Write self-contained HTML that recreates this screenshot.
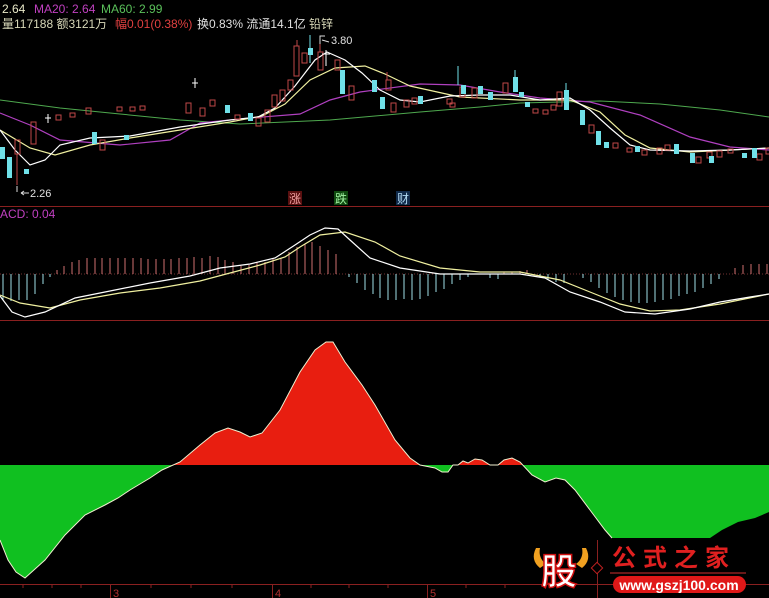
<!DOCTYPE html>
<html><head><meta charset="utf-8"><style>
html,body{margin:0;padding:0;background:#000;width:769px;height:598px;overflow:hidden}
svg{display:block}
text{font-family:"Liberation Sans","Noto Sans CJK SC",sans-serif}
</style></head><body>
<svg width="769" height="598" viewBox="0 0 769 598" xmlns="http://www.w3.org/2000/svg">
<rect width="769" height="598" fill="#000"/>
<!-- header text -->
<text x="2" y="13" font-size="12" fill="#e8e8c8">2.64</text>
<text x="34" y="13" font-size="12" fill="#c040c0">MA20: 2.64</text>
<text x="101" y="13" font-size="12" fill="#5ac05a">MA60: 2.99</text>
<text x="2" y="28" font-size="12" fill="#d8d8b8">量117188 额3121万</text>
<text x="115" y="28" font-size="12" fill="#e04040">幅0.01(0.38%)</text>
<text x="197" y="28" font-size="12" fill="#e0e0e0">换0.83% 流通14.1亿</text>
<text x="309" y="28" font-size="12" fill="#d8d8b8">铅锌</text>
<!-- separators -->
<line x1="0" y1="206.5" x2="769" y2="206.5" stroke="#8a2020"/>
<line x1="0" y1="320.5" x2="769" y2="320.5" stroke="#8a2020"/>
<!-- MA lines -->
<polyline fill="none" stroke="#4ea84e" stroke-width="1" points="0,100 60,108 120,114 180,120 240,124 330,120 420,112 480,107 520,103 600,101 660,104 720,110 769,117"/>
<polyline fill="none" stroke="#b040c0" stroke-width="1.2" points="0,113 30,125 60,140 120,145 170,140 200,123 250,118 300,114 330,100 360,92 420,84 460,85 500,92 540,98 590,102 640,115 690,137 730,147 769,150"/>
<polyline fill="none" stroke="#f0f0a0" stroke-width="1.2" points="0,130 30,148 55,155 90,145 130,138 180,130 230,122 262,116 285,104 310,80 335,68 365,66 385,74 410,86 460,97 520,100 570,100 600,112 625,135 650,148 690,152 730,150 769,148"/>
<polyline fill="none" stroke="#ffffff" stroke-width="1.2" points="0,130 15,150 30,165 45,160 60,145 90,138 130,136 180,127 230,120 258,117 275,108 295,86 315,60 327,52 345,60 362,73 380,90 400,100 420,102 450,96 480,95 510,95 540,100 570,98 590,110 610,128 630,145 650,150 690,151 730,150 769,148"/>
<!-- candles red (hollow) -->
<g fill="none" stroke="#c04848" stroke-width="1">
<rect x="15" y="140" width="5" height="14"/><rect x="31" y="122" width="5" height="22"/><rect x="56" y="115" width="5" height="5"/><rect x="70" y="113" width="5" height="4"/>
<rect x="86" y="108" width="5" height="6"/><rect x="100" y="140" width="5" height="10"/><rect x="117" y="107" width="5" height="4"/><rect x="130" y="107" width="5" height="4"/>
<rect x="140" y="106" width="5" height="4"/><rect x="186" y="103" width="5" height="10"/><rect x="200" y="108" width="5" height="8"/><rect x="210" y="100" width="5" height="6"/>
<rect x="235" y="115" width="5" height="4"/><rect x="256" y="118" width="5" height="8"/><rect x="265" y="110" width="5" height="12"/><rect x="272" y="95" width="5" height="12"/>
<rect x="280" y="90" width="5" height="11"/><rect x="288" y="80" width="5" height="10"/><rect x="294" y="46" width="5" height="30"/><rect x="302" y="53" width="5" height="10"/>
<rect x="318" y="52" width="5" height="18"/><rect x="335" y="60" width="5" height="10"/><rect x="349" y="86" width="5" height="14"/><rect x="386" y="80" width="5" height="10"/>
<rect x="391" y="103" width="5" height="9"/><rect x="404" y="100" width="5" height="7"/><rect x="412" y="98" width="5" height="6"/><rect x="447" y="99" width="5" height="5"/>
<rect x="450" y="103" width="5" height="4"/><rect x="460" y="87" width="5" height="10"/><rect x="472" y="88" width="5" height="10"/><rect x="503" y="83" width="5" height="10"/>
<rect x="533" y="109" width="5" height="4"/><rect x="543" y="110" width="5" height="4"/><rect x="551" y="105" width="5" height="5"/><rect x="557" y="92" width="5" height="14"/>
<rect x="589" y="125" width="5" height="8"/><rect x="613" y="143" width="5" height="5"/><rect x="627" y="148" width="5" height="4"/><rect x="642" y="150" width="5" height="5"/>
<rect x="657" y="148" width="5" height="6"/><rect x="665" y="145" width="5" height="5"/><rect x="696" y="157" width="5" height="6"/><rect x="707" y="152" width="5" height="6"/>
<rect x="717" y="151" width="5" height="6"/><rect x="728" y="149" width="5" height="4"/><rect x="757" y="154" width="5" height="6"/><rect x="766" y="148" width="4" height="6"/>
</g>
<!-- candles cyan (filled) -->
<g fill="#70e0e8">
<rect x="0" y="147" width="5" height="12"/><rect x="7" y="157" width="5" height="21"/><rect x="24" y="169" width="5" height="5"/><rect x="92" y="132" width="5" height="12"/>
<rect x="124" y="135" width="5" height="5"/><rect x="225" y="105" width="5" height="8"/><rect x="248" y="113" width="5" height="8"/><rect x="308" y="48" width="5" height="7"/>
<rect x="340" y="70" width="5" height="24"/><rect x="372" y="80" width="5" height="12"/><rect x="380" y="97" width="5" height="12"/><rect x="418" y="96" width="5" height="8"/>
<rect x="461" y="85" width="5" height="9"/><rect x="478" y="86" width="5" height="8"/><rect x="488" y="92" width="5" height="8"/><rect x="513" y="77" width="5" height="15"/>
<rect x="519" y="92" width="5" height="5"/><rect x="525" y="102" width="5" height="5"/><rect x="564" y="90" width="5" height="20"/><rect x="580" y="110" width="5" height="15"/>
<rect x="596" y="131" width="5" height="14"/><rect x="604" y="142" width="5" height="6"/><rect x="635" y="146" width="5" height="6"/><rect x="674" y="144" width="5" height="10"/>
<rect x="690" y="153" width="5" height="6"/><rect x="690" y="155" width="5" height="8"/><rect x="709" y="156" width="5" height="7"/><rect x="742" y="153" width="5" height="5"/><rect x="752" y="148" width="5" height="10"/>
</g>
<g stroke="#c04848"><line x1="297" y1="40" x2="297" y2="46"/><line x1="320" y1="38" x2="320" y2="52"/><line x1="387" y1="72" x2="387" y2="80"/><line x1="17" y1="154" x2="17" y2="185"/></g>
<g stroke="#70e0e8"><line x1="310" y1="35" x2="310" y2="63"/><line x1="458" y1="66" x2="458" y2="85"/><line x1="515" y1="70" x2="515" y2="77"/><line x1="566" y1="83" x2="566" y2="90"/></g>
<g stroke="#fff"><line x1="326" y1="50" x2="326" y2="66"/><line x1="322" y1="54" x2="330" y2="54"/><line x1="48" y1="114" x2="48" y2="123"/><line x1="45" y1="118" x2="51" y2="118"/><line x1="195" y1="78" x2="195" y2="88"/><line x1="192" y1="83" x2="198" y2="83"/></g>
<text x="331" y="44" font-size="11" fill="#e0e0e0">3.80</text>
<path d="M320 44 L320 36 L325 36 M322 40 L329 42" stroke="#ddd" fill="none"/>
<text x="30" y="197" font-size="11" fill="#e0e0e0">2.26</text>
<path d="M17 186 L17 192 M21 193 L29 193 M21 193 L24 191 M21 193 L24 195" stroke="#ddd" fill="none"/>
<!-- 涨 跌 财 -->
<rect x="288" y="191" width="14" height="14" fill="#5a1010"/><text x="289" y="203" font-size="12" fill="#f0a0a0">涨</text>
<rect x="334" y="191" width="14" height="14" fill="#104a10"/><text x="335" y="203" font-size="12" fill="#a0f0a0">跌</text>
<rect x="396" y="191" width="14" height="14" fill="#102a4a"/><text x="397" y="203" font-size="12" fill="#b0d8f0">财</text>
<!-- MACD -->
<text x="0" y="218" font-size="12" fill="#c040c0">ACD: 0.04</text>
<line x1="0" y1="274" x2="769" y2="274" stroke="#703030" stroke-dasharray="1,2"/>
<path stroke="#a0e0e8" stroke-width="1" fill="none" d="M3 274V300M11 274V301M19 274V300M27 274V300M35 274V294M43 274V284M50 274V277
M349 274V277M357 274V283M365 274V290M373 274V294M380 274V298M388 274V300M396 274V300M404 274V299M412 274V300M420 274V299M428 274V296M436 274V292M444 274V289M452 274V284M460 274V280M468 274V277M490 274V278M498 274V279M540 274V277M548 274V279M556 274V282M564 274V283
M583 274V278M591 274V282M599 274V288M607 274V293M615 274V297M623 274V300M631 274V302M639 274V303M647 274V303M655 274V302M663 274V300M671 274V299M679 274V296M687 274V294M695 274V292M703 274V288M711 274V284M719 274V279"/>
<path stroke="#d07070" stroke-width="1" fill="none" d="M57 274V270M64 274V266M72 274V262M79 274V260M87 274V258M95 274V258M102 274V258M110 274V258M118 274V258M125 274V258M133 274V258M141 274V258M148 274V259M156 274V259M164 274V259M171 274V259M179 274V258M187 274V258M194 274V257M202 274V258M210 274V256M218 274V257M225 274V260M233 274V262M241 274V266M249 274V265M257 274V262M265 274V262M273 274V258M281 274V258M289 274V252M297 274V247M305 274V244M312 274V242M320 274V246M328 274V250M336 274V254
M504 274V272M512 274V272M520 274V271M527 274V270M735 274V268M743 274V265M751 274V264M759 274V264M767 274V264"/>
<polyline fill="none" stroke="#f0f0a0" stroke-width="1.2" points="0,295 20,303 50,308 80,300 120,293 160,288 200,281 230,273 260,265 285,257 300,247 320,235 345,232 375,242 400,256 440,268 480,272 520,272 560,280 590,292 620,304 650,311 680,310 720,304 769,294"/>
<polyline fill="none" stroke="#ffffff" stroke-width="1.2" points="0,296 12,312 25,317 45,312 75,298 110,291 150,283 190,276 220,268 250,264 275,258 295,245 310,235 325,228 338,229 350,240 370,258 400,268 440,274 480,274 520,274 545,278 570,292 600,302 625,312 655,314 690,309 720,302 750,297 769,294"/>
<!-- big area chart -->
<line x1="0" y1="465" x2="769" y2="465" stroke="#0a0" stroke-width="0"/>
<path fill="#e81e10" d="M172,465 L180,462 L200,445 L215,433 L228,428 L240,432 L250,437 L262,433 L280,410 L300,372 L315,350 L326,342 L333,342 L345,362 L362,385 L375,405 L395,440 L410,458 L420,465 Z"/>
<path fill="#e81e10" d="M458,465 L463,461 L468,463 L475,459 L482,460 L490,465 Z M498,465 L504,460 L512,458 L520,462 L523,465 Z"/>
<path fill="#10c020" d="M0,465 L0,540 L8,560 L16,572 L25,578 L45,560 L65,535 L85,515 L105,505 L118,498 L130,490 L150,478 L162,470 L172,465 Z"/>
<path fill="#10c020" d="M420,465 L435,468 L442,472 L448,472 L453,465 Z M523,465 L532,475 L545,482 L556,478 L565,480 L575,490 L590,510 L605,530 L612,538 L710,538 L722,530 L738,522 L755,518 L769,512 L769,465 Z"/>
<polyline fill="none" stroke="#f0f0d0" stroke-width="1" points="0,540 8,560 16,572 25,578 45,560 65,535 85,515 105,505 118,498 130,490 150,478 162,470 180,462 200,445 215,433 228,428 240,432 250,437 262,433 280,410 300,372 315,350 326,342 333,342 345,362 362,385 375,405 395,440 410,458 420,465 435,468 442,472 448,472 453,465 458,465 463,461 468,463 475,459 482,460 490,465 498,465 504,460 512,458 520,462 532,475 545,482 556,478 565,480 575,490 590,510 605,530 612,538"/>
<!-- axis -->
<line x1="0" y1="584.5" x2="769" y2="584.5" stroke="#8a2020"/>
<g stroke="#8a2020"><line x1="110.5" y1="585" x2="110.5" y2="598"/><line x1="272.5" y1="585" x2="272.5" y2="598"/><line x1="427.5" y1="585" x2="427.5" y2="598"/>
<line x1="23" y1="585" x2="23" y2="588"/><line x1="52" y1="585" x2="52" y2="588"/><line x1="81" y1="585" x2="81" y2="588"/><line x1="151" y1="585" x2="151" y2="588"/><line x1="191" y1="585" x2="191" y2="588"/><line x1="232" y1="585" x2="232" y2="588"/><line x1="311" y1="585" x2="311" y2="588"/><line x1="349" y1="585" x2="349" y2="588"/><line x1="388" y1="585" x2="388" y2="588"/><line x1="466" y1="585" x2="466" y2="588"/><line x1="505" y1="585" x2="505" y2="588"/></g>
<text x="113" y="597" font-size="11" fill="#b03030">3</text>
<text x="275" y="597" font-size="11" fill="#b03030">4</text>
<text x="430" y="597" font-size="11" fill="#b03030">5</text>
<!-- logo -->
<path d="M536 548 Q530 560 540 568 L546 564 Q538 558 540 548 Z" fill="#f0a020"/>
<path d="M586 548 Q592 560 582 568 L576 564 Q584 558 582 548 Z" fill="#f0a020"/>
<text x="541" y="584" font-size="36" font-weight="bold" fill="#fff" stroke="#d01010" stroke-width="1.5" font-family="Noto Sans CJK SC,sans-serif">股</text>
<line x1="597.5" y1="540" x2="597.5" y2="598" stroke="#8a2020"/>
<rect x="593" y="564" width="8" height="8" transform="rotate(45 597 568)" fill="#000" stroke="#c02020"/>
<text x="612" y="566" font-size="24" font-weight="bold" fill="#e02020" letter-spacing="7" font-family="Noto Sans CJK SC,sans-serif">公式之家</text>
<line x1="610" y1="573" x2="746" y2="573" stroke="#8a2020" stroke-width="1.5"/>
<rect x="613" y="576" width="133" height="17" rx="8.5" fill="#e01818"/>
<text x="679" y="590" font-size="14" font-weight="bold" fill="#fff" text-anchor="middle">www.gszj100.com</text>
</svg>
</body></html>
